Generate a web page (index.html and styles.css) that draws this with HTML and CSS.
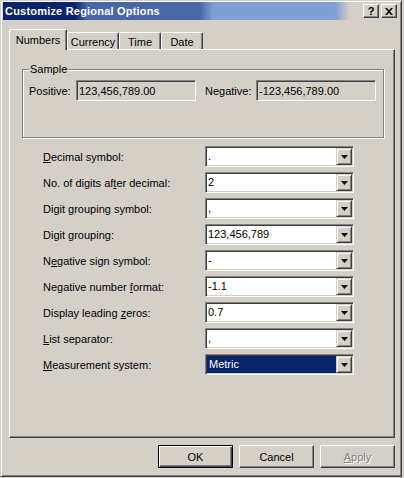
FILE: index.html
```html
<!DOCTYPE html>
<html lang="en">
<head>
    <meta charset="UTF-8">
    <meta name="viewport" content="width=device-width, initial-scale=1.0">
    <title>Customize Regional Options</title>
    <link rel="stylesheet" href="styles.css">
</head>
<body>
    <div class="window">
        <div class="titlebar">
            <span class="title">Customize Regional Options</span>
            <div class="caption-buttons">
                <button class="cap-btn help">?</button>
                <button class="cap-btn close">
                    <svg width="8" height="7" viewBox="0 0 8 7"><path d="M0 0h2l2 2.2L6 0h2L5 3.5 8 7H6L4 4.8 2 7H0l3-3.5z" fill="#000"/></svg>
                </button>
            </div>
        </div>

        <div class="tabs">
            <div class="tab active" style="width: 58px">Numbers</div>
            <div class="tab" style="width: 52px">Currency</div>
            <div class="tab" style="width: 42px">Time</div>
            <div class="tab" style="width: 42px">Date</div>
        </div>

        <div class="panel">
            <div class="group">
                <span class="group-title">Sample</span>
                <div class="sample-row">
                    <span class="sample-label positive">Positive:</span>
                    <div class="field">123,456,789.00</div>
                    <span class="sample-label negative">Negative:</span>
                    <div class="field">-123,456,789.00</div>
                </div>
            </div>

            <div class="options">
                <label><u>D</u>ecimal symbol:</label>
                <div class="combo"><span class="value">.</span><span class="drop"><svg width="7" height="4" viewBox="0 0 7 4"><path d="M0 0h7L3.5 4z" fill="#000"/></svg></span></div>

                <label>No. of digits af<u>t</u>er decimal:</label>
                <div class="combo"><span class="value">2</span><span class="drop"><svg width="7" height="4" viewBox="0 0 7 4"><path d="M0 0h7L3.5 4z" fill="#000"/></svg></span></div>

                <label>Digit <u>g</u>rouping symbol:</label>
                <div class="combo"><span class="value">,</span><span class="drop"><svg width="7" height="4" viewBox="0 0 7 4"><path d="M0 0h7L3.5 4z" fill="#000"/></svg></span></div>

                <label>Di<u>g</u>it grouping:</label>
                <div class="combo"><span class="value">123,456,789</span><span class="drop"><svg width="7" height="4" viewBox="0 0 7 4"><path d="M0 0h7L3.5 4z" fill="#000"/></svg></span></div>

                <label>N<u>e</u>gative sign symbol:</label>
                <div class="combo"><span class="value">-</span><span class="drop"><svg width="7" height="4" viewBox="0 0 7 4"><path d="M0 0h7L3.5 4z" fill="#000"/></svg></span></div>

                <label>Negative number <u>f</u>ormat:</label>
                <div class="combo"><span class="value">-1.1</span><span class="drop"><svg width="7" height="4" viewBox="0 0 7 4"><path d="M0 0h7L3.5 4z" fill="#000"/></svg></span></div>

                <label>Display leading <u>z</u>eros:</label>
                <div class="combo"><span class="value">0.7</span><span class="drop"><svg width="7" height="4" viewBox="0 0 7 4"><path d="M0 0h7L3.5 4z" fill="#000"/></svg></span></div>

                <label><u>L</u>ist separator:</label>
                <div class="combo"><span class="value">,</span><span class="drop"><svg width="7" height="4" viewBox="0 0 7 4"><path d="M0 0h7L3.5 4z" fill="#000"/></svg></span></div>

                <label><u>M</u>easurement system:</label>
                <div class="combo"><span class="value selected">Metric</span><span class="drop"><svg width="7" height="4" viewBox="0 0 7 4"><path d="M0 0h7L3.5 4z" fill="#000"/></svg></span></div>
            </div>
        </div>

        <div class="actions">
            <button class="btn default">OK</button>
            <button class="btn">Cancel</button>
            <button class="btn" disabled><u>A</u>pply</button>
        </div>
    </div>
</body>
</html>
```

FILE: styles.css
```css
* {
    box-sizing: border-box;
}
body {
    margin: 0;
    background-color: #d4d0c8;
    font-family: "Liberation Sans", Arial, sans-serif;
    font-size: 11px;
    color: #000;
}
.window {
    width: 402px;
    height: 477px;
    padding: 1px 2px 0 2px;
    border: 1px solid;
    border-color: #d4d0c8 #404040 #404040 #d4d0c8;
    box-shadow: inset 1px 1px #fff, inset -1px -1px #808080;
    display: flex;
    flex-direction: column;
}
.titlebar {
    height: 18px;
    padding: 0 2px;
    display: flex;
    align-items: center;
    justify-content: space-between;
    background: linear-gradient(to right,
        #0a246a 0, #0a246a 72px,
        #4a66a6 84px, #4a66a6 197px,
        #7e9ed4 210px, #7e9ed4 332px,
        #d4d0c8 347px);
}
.title {
    color: #fff;
    font-weight: bold;
    font-size: 11px;
    letter-spacing: 0.2px;
}
.caption-buttons {
    display: flex;
    gap: 2px;
}
.cap-btn {
    width: 16px;
    height: 14px;
    padding: 0;
    background-color: #d4d0c8;
    border: 1px solid;
    border-color: #fff #404040 #404040 #fff;
    box-shadow: inset -1px -1px #808080;
    display: flex;
    align-items: center;
    justify-content: center;
    font-family: "Liberation Sans", Arial, sans-serif;
    font-weight: bold;
    font-size: 11px;
    line-height: 1;
}
.tabs {
    height: 20px;
    margin: 9px 0 0 6px;
    display: flex;
    align-items: flex-end;
}
.tab {
    height: 17px;
    background-color: #d4d0c8;
    border: 1px solid;
    border-bottom: none;
    border-color: #fff #404040 transparent #fff;
    border-radius: 2px 2px 0 0;
    box-shadow: inset -1px 0 #808080;
    display: flex;
    align-items: center;
    justify-content: center;
    padding-top: 1px;
}
.tab.active {
    height: 21px;
    margin-bottom: -1px;
    padding-bottom: 2px;
    position: relative;
    z-index: 1;
}
.panel {
    width: 386px;
    height: 389px;
    margin-left: 6px;
    border: 1px solid;
    border-color: #fff #404040 #404040 #fff;
    box-shadow: inset -1px -1px #808080;
    padding: 0 0 0 12px;
}
.group {
    width: 362px;
    height: 69px;
    margin-top: 19px;
    border: 1px solid #808080;
    box-shadow: inset 1px 1px #fff, 1px 1px #fff;
}
.group-title {
    display: block;
    width: max-content;
    margin: -7px 0 0 6px;
    padding: 0 1px;
    line-height: 13px;
    background-color: #d4d0c8;
}
.sample-row {
    margin-top: 4px;
    padding-left: 6px;
    display: flex;
    align-items: center;
}
.sample-label.positive {
    width: 47px;
}
.sample-label.negative {
    width: 51px;
    margin-left: 9px;
}
.field {
    width: 120px;
    height: 21px;
    padding: 0 0 0 2px;
    border: 1px solid;
    border-color: #808080 #fff #fff #808080;
    box-shadow: inset 1px 1px #404040, inset -1px -1px #d4d0c8;
    display: flex;
    align-items: center;
}
.options {
    margin: 8px 0 0 21px;
    display: grid;
    grid-template-columns: 162px 149px;
    grid-auto-rows: 21px;
    row-gap: 5px;
    align-items: center;
}
.combo {
    height: 21px;
    padding: 1px;
    background-color: #fff;
    border: 1px solid;
    border-color: #808080 #fff #fff #808080;
    box-shadow: inset 1px 1px #404040, inset -1px -1px #d4d0c8;
    display: flex;
}
.combo .value {
    flex: 1;
    padding-left: 1px;
    line-height: 17px;
    white-space: pre;
}
.combo .value.selected {
    background-color: #0a246a;
    color: #fff;
    padding-left: 2px;
}
.combo .drop {
    width: 16px;
    height: 17px;
    background-color: #d4d0c8;
    border: 1px solid;
    border-color: #d4d0c8 #404040 #404040 #d4d0c8;
    box-shadow: inset 1px 1px #fff, inset -1px -1px #808080;
    display: flex;
    align-items: center;
    justify-content: center;
    padding-left: 1px;
}
.actions {
    margin: 7px 4px 0 0;
    display: flex;
    justify-content: flex-end;
    gap: 6px;
}
.btn {
    width: 75px;
    height: 23px;
    padding: 0;
    font-family: inherit;
    font-size: 11px;
    color: #000;
    background-color: #d4d0c8;
    border: 1px solid;
    border-color: #fff #404040 #404040 #fff;
    box-shadow: inset -1px -1px #808080;
}
.btn.default {
    border-color: #000;
    box-shadow: inset 1px 1px #fff, inset -1px -1px #404040, inset -2px -2px #808080;
}
.btn:disabled {
    color: #808080;
    text-shadow: 1px 1px #fff;
}
```
